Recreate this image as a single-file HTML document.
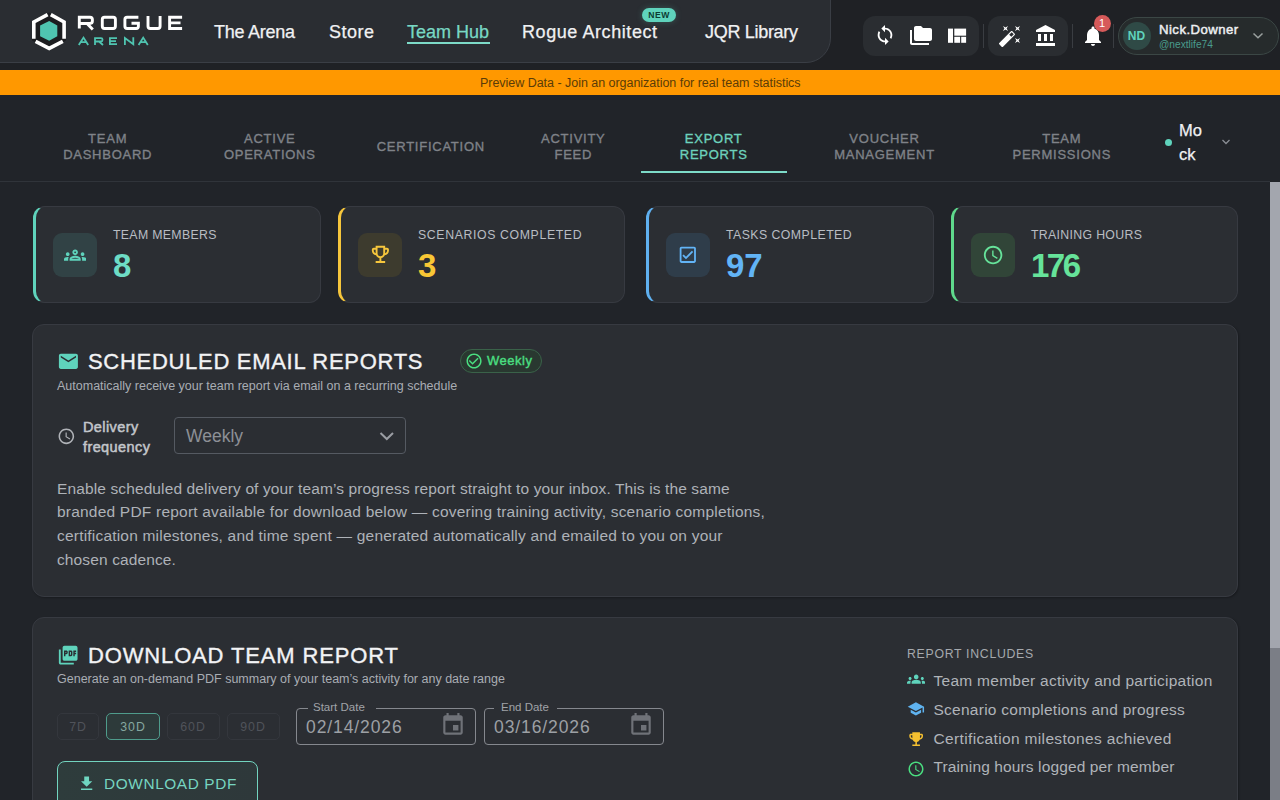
<!DOCTYPE html>
<html><head><meta charset="utf-8">
<style>
*{box-sizing:border-box;margin:0;padding:0}
html,body{width:1280px;height:800px;overflow:hidden;background:#212429;font-family:"Liberation Sans",sans-serif;color:#e8eaed;position:relative}
.a{position:absolute}
.t{position:absolute;line-height:1;white-space:nowrap}
#hdr{position:absolute;left:0;top:0;width:1280px;height:70px;background:#1f2125}
#panel{position:absolute;left:-2px;top:-2px;width:833px;height:65px;background:#2a2d32;border:1px solid #3a3e45;border-bottom-right-radius:25px}
.nav{font-size:18px;color:#f0f1f3;top:22.8px;-webkit-text-stroke:0.25px currentColor}
#orange{position:absolute;left:0;top:70px;width:1280px;height:25px;background:#ff9800}
#sub{position:absolute;left:0;top:95px;width:1270px;height:87px;background:#212429;border-bottom:1px solid #30343a}
.tab{position:absolute;text-align:center;font-size:13px;letter-spacing:0.75px;color:#7f8288;line-height:16.4px;-webkit-text-stroke:0.35px currentColor;white-space:nowrap;transform:translateX(-50%)}
#track{position:absolute;left:1270px;top:182px;width:10px;height:618px;background:#7b7e86}
#thumb{position:absolute;left:1270px;top:182px;width:10px;height:466px;background:#a3a6ae}
.grp{position:absolute;top:16px;height:40px;background:#2a2d31;border-radius:12px}
.vdiv{position:absolute;top:24px;width:1px;height:24px;background:#3a3d42}
.card{position:absolute;top:206px;width:286.5px;height:97px;background:#2b2e33;border:1px solid #373a41;border-left-width:3px;border-radius:12px;overflow:hidden}
.card .acc{position:absolute;left:-1px;top:-1px;bottom:-1px;width:20px;border-left:3px solid;border-radius:12px 0 0 12px}
.ibox{position:absolute;left:17px;top:26px;width:44px;height:44px;border-radius:9px}
.clabel{font-size:12.3px;letter-spacing:0.33px;color:#b9bdc3;top:21.6px;left:77px}
.cnum{font-size:33px;font-weight:bold;top:41.5px;left:77px}
.sec{position:absolute;left:32px;width:1206px;background:#2b2e33;border:1px solid #373a41;box-shadow:1px 1px 2px rgba(0,0,0,0.25);border-radius:12px}
.stitle{font-size:22px;letter-spacing:0.7px;color:#f2f3f5;-webkit-text-stroke:0.35px #f2f3f5}
.ssub{font-size:12.5px;color:#a9adb3}
.pbtn{position:absolute;top:713px;height:26.5px;border:1px solid #34373d;border-radius:5px;font-size:12.3px;letter-spacing:1px;color:#50535a;text-align:center;line-height:27px}
.field{position:absolute;top:708px;width:180px;height:37px;border:1px solid #85888e;border-radius:4px}
.flabel{font-size:11.5px;color:#a0a3a8;top:701.6px}
.fdate{font-size:17.5px;letter-spacing:0.9px;color:#9da0a5;top:719.2px}
.item{font-size:15.5px;color:#b0b4b9;left:933.5px;letter-spacing:0.1px}
</style></head><body>
<div id="hdr">
  <div id="panel"></div>
  <svg class="a" style="left:28px;top:8px" width="44" height="46" viewBox="0 0 44 46">
    <polygon points="21.2,4.6 37.9,13.5 37.9,32.5 21.2,41.4 4,32.5 4,13.5" fill="#1c1d20"/>
    <polyline points="19.6,6.6 5.8,14 5.8,30.8" fill="none" stroke="#fff" stroke-width="3.6"/>
    <polyline points="22.8,6.6 36.1,14 36.1,30.8" fill="none" stroke="#fff" stroke-width="3.6"/>
    <polyline points="7.6,33.4 21.2,40.4 34.8,33.4" fill="none" stroke="#fff" stroke-width="3.6"/>
    <polygon points="21.2,12.9 29.3,17.5 29.3,28.2 21.2,32.8 12.1,28.2 12.1,17.5" fill="#4fc4b0"/>
  </svg>
  <svg class="a" style="left:0;top:0" width="200" height="60" viewBox="0 0 200 60" fill="none" stroke="#fff" stroke-width="2.9">
    <path d="M79.3 28.5V17.3H90Q92.4 17.3 92.4 19.7V21.1Q92.4 23.5 90 23.5H79.3M87 23.5L92.8 29.5"/>
    <path d="M104.5 17.3H113.2Q115.4 17.3 115.4 19.5V26.3Q115.4 28.5 113.2 28.5H104.5Q102.3 28.5 102.3 26.3V19.5Q102.3 17.3 104.5 17.3Z"/>
    <path d="M138.4 17.3H127.1Q124.9 17.3 124.9 19.5V26.3Q124.9 28.5 127.1 28.5H136.2Q138.4 28.5 138.4 26.3V23.3H131.5"/>
    <path d="M148 16V26.3Q148 28.5 150.2 28.5H157.9Q160.1 28.5 160.1 26.3V16"/>
    <path d="M182.1 17.3H169.6V28.5H182.1M169.6 22.9H180.5"/>
    <g stroke="#4fc4b0" stroke-width="1.8">
      <path d="M78.8 45L83.5 37.6L88.2 45M80.8 42.2H86.2"/>
      <path d="M95 45V38.1H101Q102.5 38.1 102.5 39.6V40.1Q102.5 41.5 101 41.5H95M99 41.5L103 45"/>
      <path d="M117 38.1H109.9V44.1H117M109.9 41.1H116"/>
      <path d="M124.9 45V38L133.3 44.2V37.2"/>
      <path d="M138.6 45L143.2 37.6L147.8 45M140.6 42.2H145.8"/>
    </g>
  </svg>
  <div class="t nav" style="left:214px;letter-spacing:-0.25px">The Arena</div>
  <div class="t nav" style="left:329px;letter-spacing:0.5px">Store</div>
  <div class="t nav" style="left:407px;color:#78d8c4">Team Hub</div>
  <div class="a" style="left:407px;top:42px;width:83px;height:2px;background:#7ddbc8"></div>
  <div class="t nav" style="left:522px;letter-spacing:0.57px">Rogue Architect</div>
  <div class="a" style="left:642px;top:8px;width:34px;height:14px;border-radius:7px;background:#5fd3bc;box-shadow:0 0 6px rgba(95,211,188,0.25);color:#0d3b33;font-size:8.6px;font-weight:bold;letter-spacing:0.5px;text-align:center;line-height:14px">NEW</div>
  <div class="t nav" style="left:705px;letter-spacing:-0.3px">JQR Library</div>

  <!-- toolbar -->
  <div class="grp" style="left:863px;width:116px"></div>
  <div class="vdiv" style="left:983px"></div>
  <div class="grp" style="left:988px;width:80px"></div>
  <div class="vdiv" style="left:1072px"></div>
  <div class="vdiv" style="left:1113px"></div>

  <!-- toolbar icons -->
  <svg class="a" style="left:873.6px;top:24px" width="22" height="22" viewBox="0 0 24 24" fill="#fff"><path d="M12 4V1L8 5l4 4V6c3.31 0 6 2.690 6 6 0 1.01-.25 1.970-.7 2.8l1.460 1.460C19.540 15.030 20 13.570 20 12c0-4.420-3.580-8-8-8zm0 14c-3.310 0-6-2.690-6-6 0-1.010.25-1.970.7-2.8L5.240 7.740C4.460 8.970 4 10.430 4 12c0 4.420 3.580 8 8 8v3l4-4-4-4v3z"/></svg>
  <svg class="a" style="left:908.8px;top:23.9px" width="24" height="24" viewBox="0 0 24 24" fill="#fff"><path d="M3 6H1v13c0 1.1.9 2 2 2h17v-2H3V6z M21 4h-7l-2-2H7c-1.1 0-1.99.9-1.99 2L5 15c0 1.1.9 2 2 2h14c1.1 0 2-.9 2-2V6c0-1.1-.9-2-2-2z"/></svg>
  <svg class="a" style="left:0;top:0" width="1280" height="60" viewBox="0 0 1280 60" fill="#fff"><rect x="948" y="28.6" width="5" height="14.2"/><rect x="954.3" y="28.6" width="11.8" height="7.1"/><rect x="954.3" y="36.8" width="5.8" height="6"/><rect x="961.2" y="36.8" width="4.9" height="6"/></svg>
  <svg class="a" style="left:997.6px;top:23.9px" width="24" height="24" viewBox="0 0 24 24" fill="#fff"><path d="M7.5 5.6L10 7 8.6 4.5 10 2 7.5 3.4 5 2l1.4 2.5L5 7zm12 9.8L17 14l1.4 2.5L17 19l2.5-1.4L22 19l-1.4-2.5L22 14zM22 2l-2.5 1.4L17 2l1.4 2.5L17 7l2.5-1.4L22 7l-1.4-2.5zm-7.63 5.29c-.39-.39-1.02-.39-1.41 0L1.29 18.96c-.39.39-.39 1.02 0 1.41l2.34 2.34c.39.39 1.02.39 1.41 0L16.7 11.05c.39-.39.39-1.020 0-1.41l-2.33-2.35zm-1.03 5.49l-2.12-2.12 2.44-2.44 2.12 2.12-2.44 2.44z"/></svg>
  <svg class="a" style="left:1033.8px;top:23.8px" width="24" height="24" viewBox="0 0 24 24" fill="#fff"><path d="M4 10v7h3v-7H4zm6 0v7h3v-7h-3zM2 22h19v-3H2v3zm14-12v7h3v-7h-3zm-4.5-9L2 6v2h19V6l-9.5-5z"/></svg>
  <svg class="a" style="left:1080.5px;top:23.9px" width="24" height="24" viewBox="0 0 24 24" fill="#fff"><path d="M12 22c1.1 0 2-.9 2-2h-4c0 1.1.89 2 2 2zm6-6v-5c0-3.07-1.64-5.64-4.5-6.32V4c0-.83-.67-1.5-1.5-1.5s-1.5.67-1.5 1.5v.68C7.63 5.36 6 7.92 6 11v5l-2 2v1h16v-1l-2-2z"/></svg>
  <div class="a" style="left:1093.5px;top:14.5px;width:17px;height:17px;border-radius:9px;background:#d65a5a;color:#fff;font-size:11px;text-align:center;line-height:17px">1</div>
  <div class="a" style="left:1118px;top:17px;width:161px;height:38px;border:1px solid #3b4745;border-radius:19px;background:#262b2c"></div>
  <div class="a" style="left:1122.5px;top:22px;width:28px;height:28px;border-radius:14px;background:#2f4a46;color:#5fd3bc;font-size:12px;font-weight:bold;text-align:center;line-height:28px">ND</div>
  <div class="t" style="left:1159px;top:22.9px;font-size:13.2px;color:#eef0f2;letter-spacing:0.45px;-webkit-text-stroke:0.45px currentColor">Nick.Downer</div>
  <div class="t" style="left:1159px;top:39.6px;font-size:10.2px;color:#4a9c8c">@nextlife74</div>
  <svg class="a" style="left:1252px;top:32px" width="12" height="8" viewBox="0 0 12 8" fill="none" stroke="#9aa09f" stroke-width="1.5"><polyline points="1.5,1.5 6,5.8 10.5,1.5"/></svg>
</div>
<div id="orange"><div class="t" style="left:480px;font-size:12.5px;color:#5a3c08;position:absolute;top:6.7px;letter-spacing:-0.03px">Preview Data - Join an organization for real team statistics</div></div>
<div id="sub"></div>
<div class="tab" style="left:107.7px;top:130.9px">TEAM<br>DASHBOARD</div>
<div class="tab" style="left:269.8px;top:130.9px">ACTIVE<br>OPERATIONS</div>
<div class="tab" style="left:430.8px;top:138.9px">CERTIFICATION</div>
<div class="tab" style="left:573.3px;top:130.9px">ACTIVITY<br>FEED</div>
<div class="tab" style="left:713.7px;top:130.9px;color:#6dd2bc">EXPORT<br>REPORTS</div>
<div class="a" style="left:641px;top:170.5px;width:146px;height:2px;background:#7ddbc8"></div>
<div class="tab" style="left:884.5px;top:130.9px">VOUCHER<br>MANAGEMENT</div>
<div class="tab" style="left:1061.8px;top:130.9px">TEAM<br>PERMISSIONS</div>
<div class="a" style="left:1164.5px;top:138.5px;width:7px;height:7px;border-radius:4px;background:#5fd3bc"></div>
<div class="a" style="left:1179px;top:118.3px;font-size:16.5px;line-height:24px;color:#f0f1f3;-webkit-text-stroke:0.25px currentColor">Mo<br>ck</div>

<div id="track"></div><div id="thumb"></div>

<div class="card" style="left:33px;width:288px;border-left-color:#5fd3bc"><div class="ibox" style="background:#314245"></div><div class="t clabel">TEAM MEMBERS</div><div class="t cnum" style="color:#6ddcc5">8</div></div>
<div class="card" style="left:338px;width:287px;border-left-color:#f6c63c"><div class="ibox" style="background:#3d3b2e"></div><div class="t clabel" style="letter-spacing:0.62px">SCENARIOS COMPLETED</div><div class="t cnum" style="color:#f9c735">3</div></div>
<div class="card" style="left:646px;width:288px;border-left-color:#5fb0f0"><div class="ibox" style="background:#2f3d4a"></div><div class="t clabel" style="letter-spacing:0.45px">TASKS COMPLETED</div><div class="t cnum" style="color:#62b4f6">97</div></div>
<div class="card" style="left:951px;width:287px;border-left-color:#5fd98c"><div class="ibox" style="background:#314538"></div><div class="t clabel">TRAINING HOURS</div><div class="t cnum" style="color:#66e39a;letter-spacing:-2.5px">176</div></div>

<div class="sec" style="top:324px;height:273px"></div>
<div class="t stitle" style="left:88px;top:351.4px">SCHEDULED EMAIL REPORTS</div>
<div class="a" style="left:460px;top:349px;width:82px;height:24px;border:1px solid #3a6249;border-radius:12px;background:#293830"></div>
<div class="t" style="left:487px;top:353.9px;font-size:13px;letter-spacing:0.5px;color:#4ade80;-webkit-text-stroke:0.4px currentColor">Weekly</div>
<div class="t ssub" style="left:57px;top:380.1px">Automatically receive your team report via email on a recurring schedule</div>
<div class="a" style="left:83px;top:416.5px;font-size:14.5px;line-height:20px;color:#c3c6cb;letter-spacing:0.4px;-webkit-text-stroke:0.5px currentColor">Delivery<br>frequency</div>
<div class="a" style="left:174px;top:417px;width:232px;height:37px;border:1px solid #555a62;border-radius:4px"></div>
<div class="t" style="left:186px;top:428.4px;font-size:17.5px;color:#8d9096">Weekly</div>
<div class="a" style="left:57px;top:476.9px;font-size:15.5px;line-height:23.57px;color:#aeb2b8;white-space:nowrap"><span style="letter-spacing:0.12px">Enable scheduled delivery of your team’s progress report straight to your inbox. This is the same</span><br><span style="letter-spacing:0.21px">branded PDF report available for download below — covering training activity, scenario completions,</span><br><span style="letter-spacing:0.2px">certification milestones, and time spent — generated automatically and emailed to you on your</span><br><span style="letter-spacing:0.12px">chosen cadence.</span></div>

<div class="sec" style="top:617px;height:200px"></div>
<div class="t stitle" style="left:88px;top:644.5px;letter-spacing:0.85px">DOWNLOAD TEAM REPORT</div>
<div class="t ssub" style="left:57px;top:672.9px">Generate an on-demand PDF summary of your team’s activity for any date range</div>
<div class="pbtn" style="left:57px;width:42px">7D</div>
<div class="pbtn" style="left:106px;width:54px;border-color:#4f9c8c;background:#2d3a3a;color:#86a8a0">30D</div>
<div class="pbtn" style="left:166.5px;width:53px">60D</div>
<div class="pbtn" style="left:226.5px;width:53px">90D</div>
<div class="field" style="left:296px"></div>
<div class="a" style="left:308px;top:706px;width:68px;height:4px;background:#2b2e33"></div>
<div class="t flabel" style="left:313px">Start Date</div>
<div class="t fdate" style="left:306px">02/14/2026</div>
<div class="field" style="left:484px"></div>
<div class="a" style="left:494px;top:706px;width:63px;height:4px;background:#2b2e33"></div>
<div class="t flabel" style="left:501px">End Date</div>
<div class="t fdate" style="left:494px">03/16/2026</div>
<div class="a" style="left:57px;top:761px;width:201px;height:60px;border:1.5px solid #72d4bf;border-radius:8px;background:linear-gradient(90deg,#2e3c3c,#2e383a)"></div>
<div class="t" style="left:104px;top:776px;font-size:15.4px;color:#76d5c1;letter-spacing:0.6px">DOWNLOAD PDF</div>

<div class="t" style="left:907px;top:647.5px;font-size:12.3px;letter-spacing:0.7px;color:#a5a9ae">REPORT INCLUDES</div>
<div class="t item" style="top:672.8px;letter-spacing:0.27px">Team member activity and participation</div>
<div class="t item" style="top:701.9px;letter-spacing:0.26px">Scenario completions and progress</div>
<div class="t item" style="top:730.5px;letter-spacing:0.35px">Certification milestones achieved</div>
<div class="t item" style="top:759.1px;letter-spacing:0.12px">Training hours logged per member</div>

<!-- card icons -->
<svg class="a" style="left:63.9px;top:243.8px" width="22.3" height="22.3" viewBox="0 0 24 24" fill="#5fd3bc"><path d="M4 13c1.1 0 2-.9 2-2s-.9-2-2-2-2 .9-2 2 .9 2 2 2zm1.13 1.1c-.37-.06-.74-.1-1.130-.1-.99 0-1.93.21-2.78.58C.48 14.9 0 15.62 0 16.43V18h4.5v-1.61c0-.83.23-1.61.63-2.29zM20 13c1.1 0 2-.9 2-2s-.9-2-2-2-2 .9-2 2 .9 2 2 2zm4 3.43c0-.81-.48-1.53-1.22-1.85-.85-.37-1.79-.58-2.78-.58-.39 0-.76.04-1.13.1.4.68.63 1.46.63 2.29V18H24v-1.57zm-7.76-2.78c-1.17-.52-2.61-.9-4.24-.9-1.63 0-3.07.39-4.24.9C6.68 14.13 6 15.21 6 16.39V18h12v-1.61c0-1.18-.68-2.26-1.76-2.74zM8.07 16c.09-.23.13-.39.91-.69.97-.38 1.99-.56 3.02-.56s2.05.18 3.020.56c.77.3.81.46.91.69H8.07zM12 8c.55 0 1 .45 1 1s-.45 1-1 1-1-.45-1-1 .45-1 1-1m0-2c-1.66 0-3 1.34-3 3s1.34 3 3 3 3-1.34 3-3-1.34-3-3-3z"/></svg>
<svg class="a" style="left:368.9px;top:243.4px" width="22.8" height="22.8" viewBox="0 0 24 24" fill="#f6c63c"><path d="M19 5h-2V3H7v2H5c-1.1 0-2 .9-2 2v1c0 2.55 1.92 4.63 4.39 4.94.63 1.5 1.98 2.63 3.61 2.96V19H7v2h10v-2h-4v-3.1c1.63-.33 2.98-1.46 3.61-2.96C19.08 12.63 21 10.55 21 8V7c0-1.1-.9-2-2-2zM5 8V7h2v3.82C5.84 10.4 5 9.3 5 8zm7 6c-1.65 0-3-1.35-3-3V5h6v6c0 1.65-1.35 3-3 3zm7-6c0 1.3-.84 2.4-2 2.82V7h2v1z"/></svg>
<svg class="a" style="left:677.2px;top:243.9px" width="21.6" height="21.6" viewBox="0 0 24 24" fill="#62b4f6"><path d="M19 3H5c-1.11 0-2 .9-2 2v14c0 1.1.89 2 2 2h14c1.11 0 2-.9 2-2V5c0-1.1-.89-2-2-2zm0 16H5V5h14v14zM17.99 9l-1.41-1.42-6.59 6.59-2.58-2.57-1.42 1.41 4 3.99z"/></svg>
<svg class="a" style="left:981.9px;top:244px" width="22.2" height="22.2" viewBox="0 0 24 24" fill="#66e39a"><path d="M11.99 2C6.47 2 2 6.48 2 12s4.47 10 9.99 10C17.52 22 22 17.52 22 12S17.52 2 11.99 2zM12 20c-4.42 0-8-3.58-8-8s3.58-8 8-8 8 3.58 8 8-3.58 8-8 8zm.5-13H11v6l5.25 3.15.75-1.23-4.5-2.67z"/></svg>
<!-- section icons -->
<svg class="a" style="left:56.6px;top:350px" width="22.8" height="22.8" viewBox="0 0 24 24" fill="#5fd3bc"><path d="M20 4H4c-1.1 0-1.99.9-1.99 2L2 18c0 1.1.9 2 2 2h16c1.1 0 2-.9 2-2V6c0-1.1-.9-2-2-2zm0 4l-8 5-8-5V6l8 5 8-5v2z"/></svg>
<svg class="a" style="left:464.8px;top:351.9px" width="18.1" height="18.1" viewBox="0 0 24 24" fill="#4ade80"><path d="M16.59 7.58L10 14.17l-3.59-3.58L5 12l5 5 8-8zM12 2C6.48 2 2 6.48 2 12s4.48 10 10 10 10-4.48 10-10S17.52 2 12 2zm0 18c-4.42 0-8-3.58-8-8s3.58-8 8-8 8 3.58 8 8-3.58 8-8 8z"/></svg>
<svg class="a" style="left:56.5px;top:427.1px" width="18.7" height="18.7" viewBox="0 0 24 24" fill="#b0b3b8"><path d="M11.99 2C6.47 2 2 6.48 2 12s4.47 10 9.99 10C17.52 22 22 17.52 22 12S17.52 2 11.99 2zM12 20c-4.42 0-8-3.58-8-8s3.58-8 8-8 8 3.58 8 8-3.58 8-8 8zm.5-13H11v6l5.25 3.15.75-1.23-4.5-2.67z"/></svg>
<svg class="a" style="left:378px;top:430px" width="18" height="12" viewBox="0 0 18 12" fill="none" stroke="#9a9da3" stroke-width="2"><polyline points="2.5,3 8.8,9 15,3"/></svg>
<svg class="a" style="left:56.7px;top:643.7px" width="22.4" height="22.4" viewBox="0 0 24 24" fill="#5fd3bc"><path d="M20 2H8c-1.1 0-2 .9-2 2v12c0 1.1.9 2 2 2h12c1.1 0 2-.9 2-2V4c0-1.1-.9-2-2-2zm-8.5 7.5c0 .83-.67 1.5-1.5 1.5H9v2H7.5V7H10c.83 0 1.5.67 1.5 1.5v1zm5 2c0 .83-.67 1.5-1.5 1.5h-2.5V7H15c.83 0 1.5.67 1.5 1.5v3zm4-3H19v1h1.5V11H19v2h-1.5V7h3v1.5zM9 9.5h1v-1H9v1zM4 6H2v14c0 1.1.9 2 2 2h14v-2H4V6zm10 5.5h1v-3h-1v3z"/></svg>
<svg class="a" style="left:439.6px;top:712.3px" width="26" height="26" viewBox="0 0 24 24" fill="#6f7278"><path d="M17 12h-5v5h5v-5zM16 1v2H8V1H6v2H5c-1.11 0-1.99.9-1.99 2L3 19c0 1.1.89 2 2 2h14c1.1 0 2-.9 2-2V5c0-1.1-.9-2-2-2h-1V1h-2zm3 18H5V8h14v11z"/></svg>
<svg class="a" style="left:627.6px;top:712.3px" width="26" height="26" viewBox="0 0 24 24" fill="#6f7278"><path d="M17 12h-5v5h5v-5zM16 1v2H8V1H6v2H5c-1.11 0-1.99.9-1.99 2L3 19c0 1.1.89 2 2 2h14c1.1 0 2-.9 2-2V5c0-1.1-.9-2-2-2h-1V1h-2zm3 18H5V8h14v11z"/></svg>
<svg class="a" style="left:77.2px;top:773.6px" width="19.3" height="19.3" viewBox="0 0 24 24" fill="#6fd6c0"><path d="M19 9h-4V3H9v6H5l7 7 7-7zM5 18v2h14v-2H5z"/></svg>
<!-- list icons -->
<svg class="a" style="left:907px;top:669.6px" width="18.4" height="18.4" viewBox="0 0 24 24" fill="#5fd3bc"><path d="M12 12.75c1.63 0 3.07.39 4.24.9 1.08.48 1.76 1.56 1.76 2.73V18H6v-1.61c0-1.18.68-2.26 1.76-2.73 1.17-.52 2.61-.91 4.24-.91zM4 13c1.1 0 2-.9 2-2s-.9-2-2-2-2 .9-2 2 .9 2 2 2zm1.13 1.1c-.37-.06-.74-.1-1.13-.1-.99 0-1.93.21-2.78.58C.48 14.9 0 15.62 0 16.43V18h4.5v-1.61c0-.83.23-1.61.63-2.29zM20 13c1.1 0 2-.9 2-2s-.9-2-2-2-2 .9-2 2 .9 2 2 2zm4 3.43c0-.81-.48-1.53-1.22-1.85-.85-.37-1.79-.58-2.78-.58-.39 0-.76.04-1.13.1.4.68.63 1.46.63 2.29V18H24v-1.57zM12 6c1.66 0 3 1.34 3 3s-1.34 3-3 3-3-1.34-3-3 1.34-3 3-3z"/></svg>
<svg class="a" style="left:907.2px;top:700.2px" width="17.8" height="17.8" viewBox="0 0 24 24" fill="#5fb3f0"><path d="M5 13.18v4L12 21l7-3.82v-4L12 17l-7-3.82zM12 3L1 9l11 6 9-4.91V17h2V9L12 3z"/></svg>
<svg class="a" style="left:906.5px;top:729.7px" width="18.3" height="18.3" viewBox="0 0 24 24" fill="#f5c030"><path d="M19 5h-2V3H7v2H5c-1.1 0-2 .9-2 2v1c0 2.55 1.92 4.63 4.39 4.94.63 1.5 1.98 2.63 3.61 2.96V19H7v2h10v-2h-4v-3.1c1.63-.33 2.98-1.46 3.61-2.96C19.08 12.63 21 10.55 21 8V7c0-1.1-.9-2-2-2zM5 8V7h2v3.82C5.84 10.4 5 9.3 5 8zm14 0c0 1.3-.84 2.4-2 2.82V7h2v1z"/></svg>
<svg class="a" style="left:906.5px;top:759.5px" width="18" height="18" viewBox="0 0 24 24" fill="#4ade80"><path d="M11.99 2C6.47 2 2 6.48 2 12s4.47 10 9.99 10C17.52 22 22 17.52 22 12S17.52 2 11.99 2zM12 20c-4.42 0-8-3.58-8-8s3.58-8 8-8 8 3.58 8 8-3.58 8-8 8zm.5-13H11v6l5.25 3.15.75-1.23-4.5-2.67z"/></svg>
<svg class="a" style="left:1221px;top:139px" width="10" height="6" viewBox="0 0 10 6" fill="none" stroke="#8a8e95" stroke-width="1.3"><polyline points="1.5,1 5,4.5 8.5,1"/></svg>
</body></html>
